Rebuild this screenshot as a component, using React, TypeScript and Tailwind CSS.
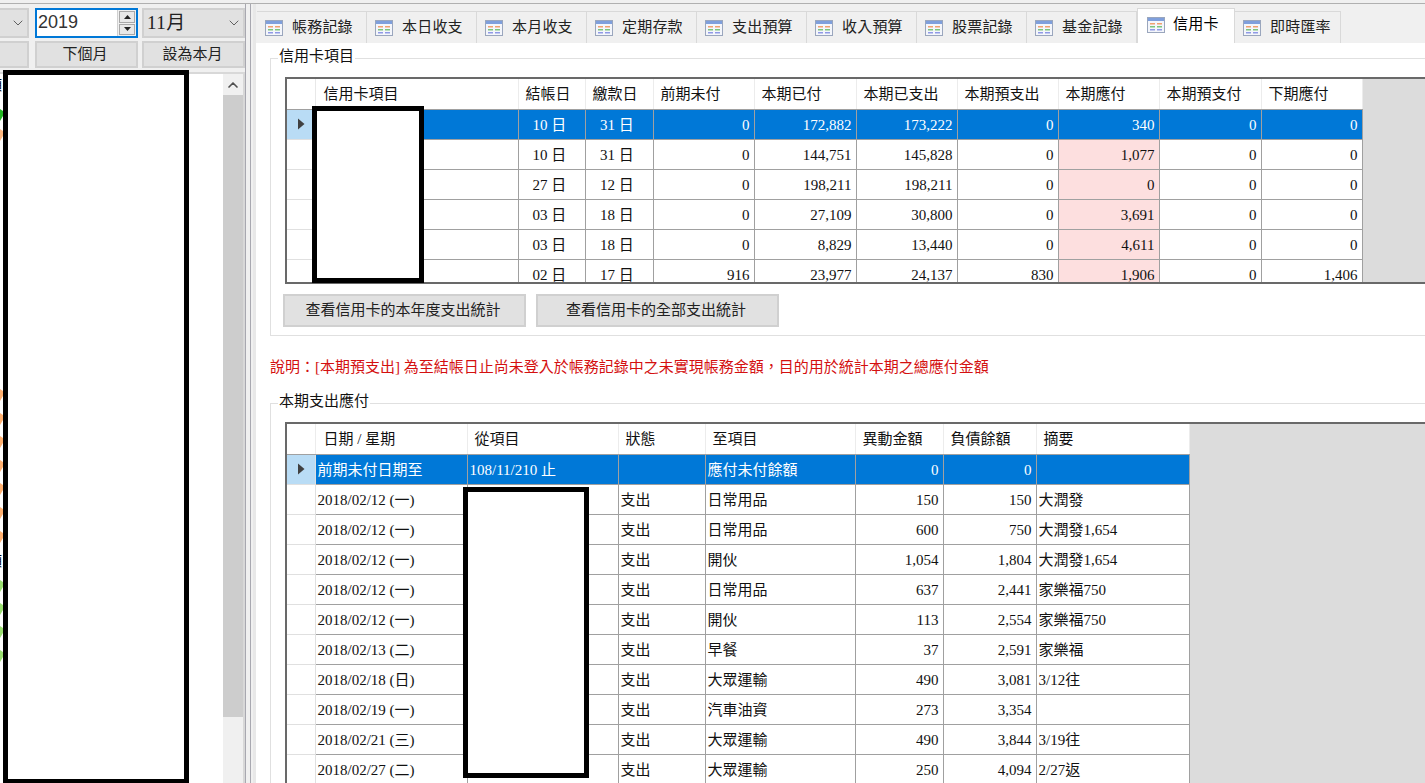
import { ChevronDown, ChevronUp } from "lucide-react";

const tabs = ["帳務記錄", "本日收支", "本月收支", "定期存款", "支出預算", "收入預算", "股票記錄", "基金記錄", "信用卡", "即時匯率"];

const cardHead = ["信用卡項目", "結帳日", "繳款日", "前期未付", "本期已付", "本期已支出", "本期預支出", "本期應付", "本期預支付", "下期應付"];
const cardRows = [
  ["", "10 日", "31 日", "0", "172,882", "173,222", "0", "340", "0", "0"],
  ["", "10 日", "31 日", "0", "144,751", "145,828", "0", "1,077", "0", "0"],
  ["", "27 日", "12 日", "0", "198,211", "198,211", "0", "0", "0", "0"],
  ["", "03 日", "18 日", "0", "27,109", "30,800", "0", "3,691", "0", "0"],
  ["", "03 日", "18 日", "0", "8,829", "13,440", "0", "4,611", "0", "0"],
  ["", "02 日", "17 日", "916", "23,977", "24,137", "830", "1,906", "0", "1,406"],
];

const payHead = ["日期 / 星期", "從項目", "狀態", "至項目", "異動金額", "負債餘額", "摘要"];
const payRows = [
  ["前期未付日期至", "108/11/210 止", "", "應付未付餘額", "0", "0", ""],
  ["2018/02/12 (一)", "", "支出", "日常用品", "150", "150", "大潤發"],
  ["2018/02/12 (一)", "", "支出", "日常用品", "600", "750", "大潤發1,654"],
  ["2018/02/12 (一)", "", "支出", "開伙", "1,054", "1,804", "大潤發1,654"],
  ["2018/02/12 (一)", "", "支出", "日常用品", "637", "2,441", "家樂福750"],
  ["2018/02/12 (一)", "", "支出", "開伙", "113", "2,554", "家樂福750"],
  ["2018/02/13 (二)", "", "支出", "早餐", "37", "2,591", "家樂福"],
  ["2018/02/18 (日)", "", "支出", "大眾運輸", "490", "3,081", "3/12往"],
  ["2018/02/19 (一)", "", "支出", "汽車油資", "273", "3,354", ""],
  ["2018/02/21 (三)", "", "支出", "大眾運輸", "490", "3,844", "3/19往"],
  ["2018/02/27 (二)", "", "支出", "大眾運輸", "250", "4,094", "2/27返"],
];

const TabIcon = () => (
  <svg width="18" height="16" viewBox="0 0 18 16" className="shrink-0">
    <rect x="0.5" y="0.5" width="17" height="15" fill="#f4f6fb" stroke="#9aa6bd" />
    <rect x="1" y="1" width="16" height="3" fill="#7f9fdc" />
    <rect x="3" y="6" width="5" height="1.5" fill="#f0a070" />
    <rect x="10" y="6" width="5" height="1.5" fill="#f0a070" />
    <rect x="3" y="9" width="5" height="1.5" fill="#7cc47c" />
    <rect x="10" y="9" width="5" height="1.5" fill="#7cc47c" />
    <rect x="3" y="12" width="5" height="1.5" fill="#8f9ae6" />
    <rect x="10" y="12" width="5" height="1.5" fill="#8f9ae6" />
  </svg>
);

const RowArrow = () => (
  <svg width="8" height="12" viewBox="0 0 8 12" className="mx-auto">
    <path d="M1 0.5 L7.5 6 L1 11.5 Z" fill="#404040" />
  </svg>
);

const Marker = ({ color }: { color: string }) => (
  <svg width="3" height="14" viewBox="0 0 3 14" className="block">
    <path d="M0 1 L3 3 V8 L0 13 Z" fill={color} />
  </svg>
);

const Box = ({ className }: { className: string }) => (
  <div className={`absolute z-10 border-[5px] border-black bg-white ${className}`} />
);

const Btn = ({ label, className }: { label: string; className: string }) => (
  <button className={`flex items-center justify-center border-2 border-[#d0d0d0] bg-[#e1e1e1] text-[15px] text-[#222] ${className}`}>
    {label}
  </button>
);

const Legend = ({ label }: { label: string }) => (
  <span className="absolute left-[7px] top-[-13px] bg-white px-[1px] text-[15px] leading-[20px] text-[#111]">{label}</span>
);

export default function App() {
  return (
    <div className="relative flex h-[783px] w-[1425px] flex-col overflow-hidden bg-[#f0f0f0] [font-family:'Liberation_Serif','Noto_Sans_CJK_TC',serif] text-[15px] text-black">
      <div className="h-[4px] shrink-0 border-b border-[#b0b0b0]" />

      <div className="flex min-h-0 flex-1">
        {/* left pane */}
        <div className="flex w-[245px] shrink-0 flex-col pt-[4px]">
          <div className="flex h-[30px]">
            <div className="flex w-[29px] items-center justify-end border-2 border-l-0 border-[#d0d0d0] bg-[#e1e1e1] pr-[1px]">
              <ChevronDown className="h-4 w-4 text-[#606060]" strokeWidth={1.5} />
            </div>
            <div className="ml-[6px] flex w-[103px] border-2 border-[#0078d7] bg-white">
              <span className="flex-1 pl-[1px] text-[18px] leading-[24px] [font-family:'Liberation_Sans',sans-serif] text-[#333]">2019</span>
              <div className="flex w-[19px] flex-col gap-[1px] border-l border-[#d0d0d0] bg-[#f0f0f0] p-[1px]">
                <div className="flex flex-1 items-center justify-center border border-[#a8a8a8] bg-[#e8e8e8]">
                  <svg width="7" height="4" viewBox="0 0 7 4"><path d="M3.5 0 L7 4 H0 Z" fill="#222" /></svg>
                </div>
                <div className="flex flex-1 items-center justify-center border border-[#a8a8a8] bg-[#e8e8e8]">
                  <svg width="7" height="4" viewBox="0 0 7 4"><path d="M0 0 H7 L3.5 4 Z" fill="#222" /></svg>
                </div>
              </div>
            </div>
            <div className="ml-[4px] flex w-[103px] items-center justify-between border-2 border-[#d0d0d0] bg-[#e1e1e1] pl-[3px] pr-[1px]">
              <span className="text-[19px] tracking-[0.5px] text-[#222]">11月</span>
              <ChevronDown className="h-4 w-4 text-[#606060]" strokeWidth={1.5} />
            </div>
          </div>
          <div className="mt-[3px] flex h-[27px]">
            <Btn label="" className="w-[29px] border-l-0" />
            <Btn label="下個月" className="ml-[6px] w-[103px] pb-[1px] pr-[3px]" />
            <Btn label="設為本月" className="ml-[4px] w-[103px] pb-[1px] pr-[2px]" />
          </div>
          <div className="mt-[4px] flex min-h-0 flex-1 border-t-2 border-r-2 border-[#d8d8d8] bg-white">
            <div className="flex w-[223px] flex-col overflow-hidden">
              <span className="mt-[2px] ml-[-12px] h-[20px] text-[14px] leading-[20px]">額</span>
              <div className="mt-[12px]"><Marker color="#22b822" /></div>
              <div className="mt-[6px]"><Marker color="#ffb880" /></div>
              <div className="mt-[246px] flex flex-col gap-[9.6px]">
                {[0, 1, 2, 3, 4, 5, 6].map(i => <Marker key={i} color="#ffb070" />)}
              </div>
              <span className="mt-[8px] ml-[-12px] h-[20px] text-[14px] leading-[20px]">額</span>
              <div className="mt-[7px] flex flex-col gap-[9.4px]">
                {[0, 1, 2, 3].map(i => <Marker key={i} color="#9ade70" />)}
              </div>
            </div>
            <div className="flex w-[20px] flex-col bg-[#f0f0f0]">
              <div className="flex h-[21px] items-center justify-center">
                <ChevronUp className="h-4 w-4 text-[#505050]" strokeWidth={2.5} />
              </div>
              <div className="h-[622px] bg-[#cdcdcd]" />
            </div>
          </div>
        </div>

        {/* splitter */}
        <div className="flex w-[11px] shrink-0">
          <div className="w-[1px] bg-[#a8a8b0]" />
          <div className="ml-[4px] w-[1px] bg-[#a8a8b0]" />
          <div className="ml-[2px] w-[3px] bg-[#e8e8e8]" />
        </div>

        {/* right pane */}
        <div className="flex min-w-0 flex-1 flex-col">
          <div className="flex h-[39px] shrink-0 items-end pl-[1px]">
            {tabs.map(t =>
              t === "信用卡" ? (
                <div key={t} className="flex h-[35px] w-[98px] items-center gap-[8px] border border-b-0 border-[#d9d9d9] bg-white pb-[3px] pl-[9px]">
                  <TabIcon />
                  <span className="tracking-[0.2px]">{t}</span>
                </div>
              ) : (
                <div key={t} className={`flex h-[32px] items-center gap-[9px] border border-b-0 border-l-0 border-[#d9d9d9] bg-[#f0f0f0] pl-[8px] ${t === "即時匯率" ? "w-[106px]" : "w-[110px]"}`}>
                  <TabIcon />
                  <span className="tracking-[0.2px] text-[#222]">{t}</span>
                </div>
              ),
            )}
          </div>

          <div className="min-h-0 flex-1 overflow-hidden bg-white pl-[14px] pt-[15px]">
            {/* credit card group */}
            <div className="relative w-[1200px] border border-[#e0e0e0] pb-[8px] pl-[14px] pt-[18px]">
              <Legend label="信用卡項目" />
              <div className="h-[207px] overflow-hidden border-l-2 border-t-2 border-b-2 border-[#696969] bg-[#dcdcdc]">
                <table className="table-fixed border-collapse">
                  <colgroup>
                    <col className="w-[28px]" />
                    <col className="w-[203px]" />
                    <col className="w-[67px]" />
                    <col className="w-[68px]" />
                    <col className="w-[101px]" />
                    <col className="w-[102px]" />
                    <col className="w-[101px]" />
                    <col className="w-[101px]" />
                    <col className="w-[101px]" />
                    <col className="w-[102px]" />
                    <col className="w-[101px]" />
                  </colgroup>
                  <thead>
                    <tr className="h-[30px] bg-white">
                      <th className="border-r border-b border-b-[#a0a0a0] border-r-[#e8e8e8]" />
                      {cardHead.map((h, j) => (
                        <th key={h} className={`border-r border-b border-b-[#a0a0a0] border-r-[#ececec] text-left font-normal text-[#111] ${j === 0 ? "pl-[8px]" : "pl-[7px]"}`}>{h}</th>
                      ))}
                    </tr>
                  </thead>
                  <tbody>
                    {cardRows.map((r, i) => (
                      <tr key={i} className={i === 0 ? "h-[30px] bg-[#0078d7] text-white" : "h-[30px] bg-white text-[#111]"}>
                        <td className={`border-b border-r border-[#e0e0e0] ${i === 0 ? "bg-[#b9dcf5]" : "bg-white"}`}>{i === 0 && <RowArrow />}</td>
                        {r.map((c, j) => (
                          <td
                            key={j}
                            className={`border-b border-r border-[#a0a0a0] pr-[4px] pt-[2px] ${j === 1 || j === 2 ? "text-center" : "text-right"} ${j === 7 && i > 0 ? "bg-[#fddfdf]" : ""}`}
                          >
                            {c}
                          </td>
                        ))}
                      </tr>
                    ))}
                  </tbody>
                </table>
              </div>
              <div className="ml-[-2px] mt-[10px] flex gap-[10px]">
                <Btn label="查看信用卡的本年度支出統計" className="h-[33px] w-[243px] pr-[3px]" />
                <Btn label="查看信用卡的全部支出統計" className="h-[33px] w-[243px] pr-[3px]" />
              </div>
            </div>

            <p className="mt-[21px] h-[20px] whitespace-nowrap text-[15px] leading-[20px] text-[#d41010]">
              說明：[本期預支出] 為至結帳日止尚未登入於帳務記錄中之未實現帳務金額，目的用於統計本期之總應付金額
            </p>

            {/* payable group */}
            <div className="relative mt-[26px] w-[1200px] border border-[#e0e0e0] pl-[14px] pt-[18px]">
              <Legend label="本期支出應付" />
              <div className="h-[362px] overflow-hidden border-l-2 border-t-2 border-[#696969] bg-[#dcdcdc]">
                <table className="table-fixed border-collapse">
                  <colgroup>
                    <col className="w-[28px]" />
                    <col className="w-[152px]" />
                    <col className="w-[151px]" />
                    <col className="w-[87px]" />
                    <col className="w-[150px]" />
                    <col className="w-[88px]" />
                    <col className="w-[93px]" />
                    <col className="w-[153px]" />
                  </colgroup>
                  <thead>
                    <tr className="h-[30px] bg-white">
                      <th className="border-r border-b border-b-[#a0a0a0] border-r-[#ececec]" />
                      {payHead.map((h, j) => (
                        <th key={h} className={`border-r border-b border-b-[#a0a0a0] border-r-[#ececec] text-left font-normal text-[#111] ${j === 0 ? "pl-[8px]" : "pl-[7px]"}`}>{h}</th>
                      ))}
                    </tr>
                  </thead>
                  <tbody>
                    {payRows.map((r, i) => (
                      <tr key={i} className={i === 0 ? "h-[30px] bg-[#0078d7] text-white" : "h-[30px] bg-white text-[#111]"}>
                        <td className={`border-b border-r border-[#e0e0e0] ${i === 0 ? "bg-[#b9dcf5]" : "bg-white"}`}>{i === 0 && <RowArrow />}</td>
                        {r.map((c, j) => (
                          <td key={j} className={`whitespace-nowrap border-b border-r border-[#a0a0a0] pt-[2px] ${j === 4 || j === 5 ? "pr-[4px] text-right" : "pl-[2px]"}`}>
                            {c}
                          </td>
                        ))}
                      </tr>
                    ))}
                  </tbody>
                </table>
              </div>
            </div>
          </div>
        </div>
      </div>

      {/* redaction boxes drawn over the screenshot */}
      <Box className="left-[3px] top-[70px] h-[714px] w-[186px]" />
      <Box className="left-[312px] top-[106px] h-[177px] w-[112px]" />
      <Box className="left-[463px] top-[487px] h-[291px] w-[126px]" />
    </div>
  );
}
